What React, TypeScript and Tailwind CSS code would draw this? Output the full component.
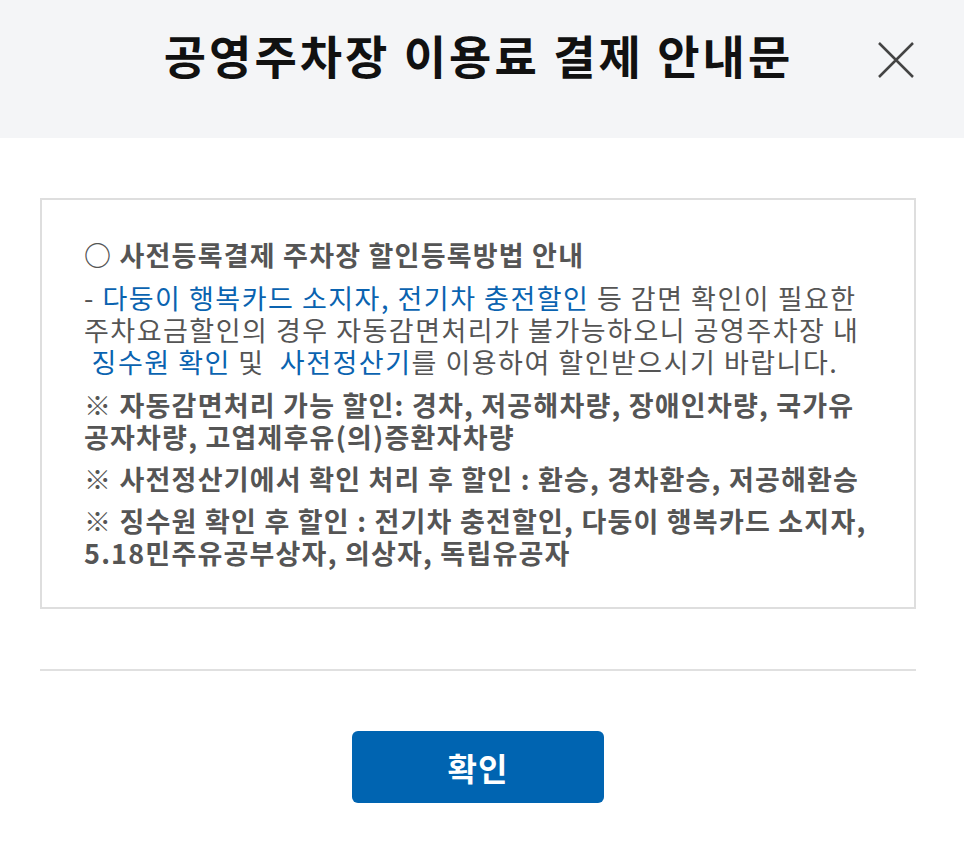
export default function App() {
  return (
    <div className="w-[964px] h-[848px] bg-white font-['Noto_Sans_CJK_KR',sans-serif]">
      {/* Header */}
      <div className="relative h-[138px] bg-[#f4f5f7] flex items-center justify-center">
        <h1 className="text-[46px] font-bold text-[#111] leading-none tracking-[3px] pb-[30px] pr-[7px]">
          공영주차장 이용료 결제 안내문
        </h1>
        <button className="absolute left-[876px] top-[40px] w-[40px] h-[40px]" aria-label="닫기">
          <svg viewBox="0 0 40 40" className="w-[40px] h-[40px]" fill="none" stroke="#444" strokeWidth="2.5">
            <path d="M3 3L37 37M37 3L3 37" />
          </svg>
        </button>
      </div>

      {/* Body */}
      <div className="px-[40px] pt-[60px]">
        <div className="w-[876px] border-2 border-[#dedede] px-[42px] pt-[39px] pb-[38px] text-[27px] leading-[32px] tracking-[1.5px] text-[#555] whitespace-nowrap">
          <p className="font-bold tracking-[1.2px]">○ 사전등록결제 주차장 할인등록방법 안내</p>
          <p className="mt-[11px]">
            - <span className="text-[#0a63b0]">다둥이 행복카드 소지자, 전기차 충전할인</span> 등 감면 확인이 필요한
            <br />
            주차요금할인의 경우 자동감면처리가 불가능하오니 공영주차장 내
            <br />
            &nbsp;<span className="text-[#0a63b0]">징수원 확인</span> 및 &nbsp;<span className="text-[#0a63b0]">사전정산기</span>를 이용하여 할인받으시기 바랍니다.
          </p>
          <p className="mt-[11px] font-bold tracking-[1.2px]">
            ※ 자동감면처리 가능 할인: 경차, 저공해차량, 장애인차량, 국가유
            <br />
            공자차량, 고엽제후유(의)증환자차량
          </p>
          <p className="mt-[10px] font-bold tracking-[1.2px]">※ 사전정산기에서 확인 처리 후 할인 : 환승, 경차환승, 저공해환승</p>
          <p className="mt-[10px] font-bold tracking-[1.2px]">
            ※ 징수원 확인 후 할인 : 전기차 충전할인, 다둥이 행복카드 소지자,
            <br />
            5.18민주유공부상자, 의상자, 독립유공자
          </p>
        </div>

        <div className="w-[876px] h-[2px] bg-[#e0e0e0] mt-[60px]" />

        <div className="flex justify-center w-[876px] mt-[60px]">
          <button className="w-[252px] h-[72px] rounded-[6px] bg-[#0064b1] text-white text-[32px] font-bold tracking-[1px]">
            확인
          </button>
        </div>
      </div>
    </div>
  );
}
